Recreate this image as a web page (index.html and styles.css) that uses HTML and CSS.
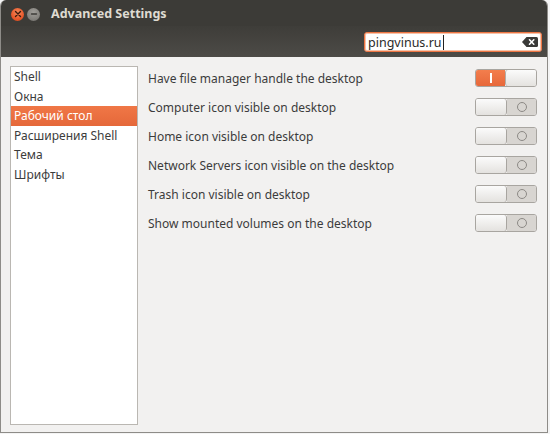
FILE: index.html
```html
<!DOCTYPE html>
<html>
<head>
<meta charset="utf-8">
<link rel="stylesheet" href="styles.css">
</head>
<body>
<div class="window">
  <div class="titlebar">
    <div class="wbtn close"><svg width="8" height="8" viewBox="0 0 8 8"><path d="M1.5 1.5L6.5 6.5M6.5 1.5L1.5 6.5" stroke="#3a1a0c" stroke-width="1.4" stroke-linecap="round"/></svg></div>
    <div class="wbtn min"><svg width="8" height="8" viewBox="0 0 8 8"><path d="M1.5 4H6.5" stroke="#3c3b37" stroke-width="1.4" stroke-linecap="round"/></svg></div>
    <div class="title">Advanced Settings</div>
  </div>
  <div class="toolbar">
    <div class="search">
      <span class="stext">pingvinus.ru</span><span class="cursor"></span>
      <svg class="clear" width="16" height="10" viewBox="0 0 16 10"><path d="M4.5 0H14.5Q16 0 16 1.5V8.5Q16 10 14.5 10H4.5L0 5Z" fill="#3a3a38"/><path d="M7.5 2.8L11.8 7.2M11.8 2.8L7.5 7.2" stroke="#fff" stroke-width="1.6" stroke-linecap="round"/></svg>
    </div>
  </div>
  <div class="content">
    <div class="sidebar">
      <div class="item">Shell</div>
      <div class="item">Окна</div>
      <div class="item selected">Рабочий стол</div>
      <div class="item">Расширения Shell</div>
      <div class="item">Тема</div>
      <div class="item">Шрифты</div>
    </div>
    <div class="settings">
      <div class="row"><span class="label">Have file manager handle the desktop</span><div class="switch on"><div class="track"><span class="bar"></span></div><div class="knob"></div></div></div>
      <div class="row"><span class="label">Computer icon visible on desktop</span><div class="switch off"><div class="knob"></div><div class="track"><span class="ring"></span></div></div></div>
      <div class="row"><span class="label">Home icon visible on desktop</span><div class="switch off"><div class="knob"></div><div class="track"><span class="ring"></span></div></div></div>
      <div class="row"><span class="label">Network Servers icon visible on the desktop</span><div class="switch off"><div class="knob"></div><div class="track"><span class="ring"></span></div></div></div>
      <div class="row"><span class="label">Trash icon visible on desktop</span><div class="switch off"><div class="knob"></div><div class="track"><span class="ring"></span></div></div></div>
      <div class="row"><span class="label">Show mounted volumes on the desktop</span><div class="switch off"><div class="knob"></div><div class="track"><span class="ring"></span></div></div></div>
    </div>
  </div>
</div>
</body>
</html>
```
FILE: styles.css
```css
html, body {
  margin: 0;
  padding: 0;
}
body {
  background: #f4f4f4;
  width: 550px;
  height: 434px;
  overflow: hidden;
  font-family: "Noto Sans", "DejaVu Sans", sans-serif;
}
.window {
  width: 546px;
  height: 432px;
  border: 1px solid #8e8c88;
  border-top: none;
  border-radius: 6px 6px 0 0;
  overflow: hidden;
  display: flex;
  flex-direction: column;
  background: #f2f1f0;
}
.titlebar {
  height: 26px;
  flex: none;
  display: flex;
  align-items: center;
  padding-left: 10px;
  background: #3c3b37;
}
.wbtn {
  width: 13px;
  height: 13px;
  border-radius: 50%;
  display: flex;
  align-items: center;
  justify-content: center;
  margin-right: 3px;
  margin-top: 2px;
}
.close {
  background: radial-gradient(circle at 50% 35%, #f58a5c 0%, #e8582a 60%, #c9461d 100%);
}
.min {
  background: radial-gradient(circle at 50% 35%, #a09e99 0%, #85837e 60%, #6c6a66 100%);
}
.title {
  margin-left: 8px;
  margin-top: 1px;
  color: #dfdbd2;
  font-weight: bold;
  font-size: 12.5px;
}
.toolbar {
  height: 31px;
  flex: none;
  display: flex;
  justify-content: flex-end;
  align-items: flex-start;
  padding: 6px 5px 0 0;
  box-sizing: border-box;
  background: linear-gradient(#3e3d39, #4d4b47);
}
.search {
  width: 178px;
  height: 20px;
  box-sizing: border-box;
  border: 1px solid #ed7543;
  border-radius: 3px;
  background: #fff;
  display: flex;
  align-items: center;
  padding: 0 3px 0 3px;
  box-shadow: inset 0 0 0 1px #f6c2a8;
}
.stext {
  font-size: 12.5px;
  color: #2a2a2a;
}
.cursor {
  width: 1px;
  height: 15px;
  background: #222;
  margin-left: 1px;
}
.clear {
  margin-left: auto;
}
.content {
  flex: 1;
  display: flex;
  padding: 9px 10px 7px 9px;
  gap: 10px;
  min-height: 0;
}
.sidebar {
  width: 126px;
  flex: none;
  border: 1px solid #bab7b2;
  background: #fff;
  font-size: 12px;
  color: #3c3c3c;
}
.item {
  height: 19.6px;
  line-height: 19.6px;
  padding-left: 3px;
  white-space: nowrap;
}
.item.selected {
  background: linear-gradient(#f07746, #e5683a);
  color: #fff;
}
.settings {
  flex: 1;
  display: flex;
  flex-direction: column;
  gap: 5px;
}
.row {
  height: 24px;
  display: flex;
  align-items: center;
  justify-content: space-between;
}
.label {
  font-size: 12px;
  color: #3c3c3c;
}
.switch {
  width: 62px;
  height: 18px;
  box-sizing: border-box;
  border: 1px solid #a8a5a0;
  border-radius: 3px;
  display: flex;
  overflow: hidden;
}
.switch .track {
  flex: 1;
  display: flex;
  align-items: center;
  justify-content: center;
}
.switch.on .track {
  background: linear-gradient(#f37e4d, #e7683a);
}
.switch.off .track {
  background: #d8d5d1;
}
.switch .knob {
  width: 31px;
  flex: none;
  background: linear-gradient(#fbfbfb, #e4e2df);
  box-sizing: border-box;
}
.switch.on .knob {
  border-left: 1px solid #b0ada8;
  border-radius: 3px 0 0 3px;
}
.switch.off .knob {
  border-right: 1px solid #a8a5a0;
  border-radius: 0 3px 3px 0;
}
.bar {
  width: 2px;
  height: 10px;
  background: #fff;
}
.ring {
  width: 8px;
  height: 8px;
  border: 1.3px solid #8c8985;
  border-radius: 50%;
}
```
